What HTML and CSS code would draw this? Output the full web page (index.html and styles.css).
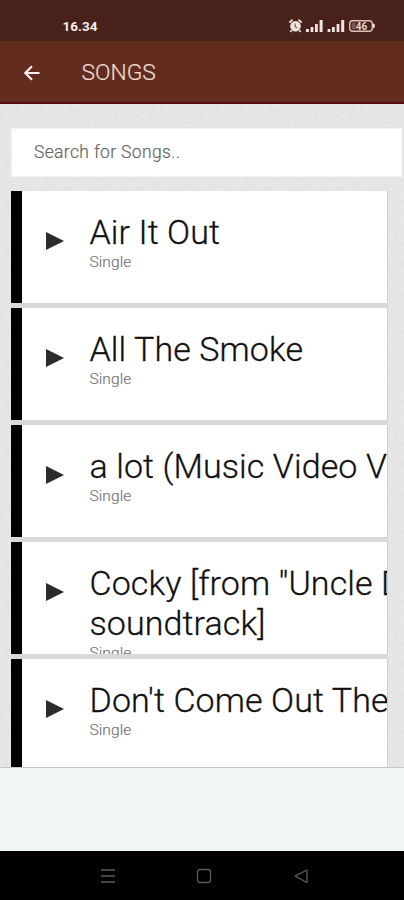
FILE: index.html
```html
<!DOCTYPE html>
<html lang="en">
<head>
<meta charset="utf-8">
<title>Songs</title>
<link rel="stylesheet" href="styles.css">
</head>
<body>
<div class="status">
  <span class="time">16.34</span>
  <svg class="indicators" width="90" height="16" viewBox="0 0 90 16">
    <g fill="#efe4df">
      <circle cx="7.5" cy="8.3" r="5.3"/>
      <path d="M1.3 4.6 4.6 1.6M13.7 4.6 10.4 1.6M3.6 12.4 2.4 13.8M11.4 12.4 12.6 13.8" stroke="#efe4df" stroke-width="1.8"/>
      <path d="M18 11h2.8v3H18zM22.600 9h2.800v5h-2.800zM27 6h2.800v8H27zM31.600 2h3v12h-3zM39.600 11h2.800v3h-2.800zM44 9h2.800v5H44zM48.600 6h2.800v8h-2.800zM53.200 2h3v12h-3z"/>
      <path d="M84.500 5.300q2.500.3 2.500 2.700t-2.500 2.700z"/>
    </g>
    <path d="M7.200 5.500v3.200l2 1.300" fill="none" stroke="#7b5a50" stroke-width="1.200"/>
    <rect x="61.700" y="2.700" width="22.600" height="10.600" rx="3" fill="none" stroke="#d9c3bb" stroke-width="1.400"/>
    <rect x="63.700" y="4.700" width="4" height="6.600" fill="#7a584f"/>
    <text class="charge" x="73.500" y="11.600" text-anchor="middle">46</text>
  </svg>
</div>
<header class="bar">
  <svg class="back" width="18" height="18" viewBox="0 0 18 18"><path d="M16.500 9H3M9 2.300 2.300 9 9 15.700" fill="none" stroke="#f8efec" stroke-width="2.200"/></svg>
  <h1>SONGS</h1>
</header>
<main class="content">
  <input class="search" type="text" placeholder="Search for Songs.." aria-label="Search for Songs">
  <ul class="songs">
    <li class="song"><svg class="play" viewBox="0 0 18 18"><path d="M0 0 18 9 0 18z"/></svg><div class="text"><h2>Air It Out</h2><p>Single</p></div></li>
    <li class="song"><svg class="play" viewBox="0 0 18 18"><path d="M0 0 18 9 0 18z"/></svg><div class="text"><h2>All The Smoke</h2><p>Single</p></div></li>
    <li class="song"><svg class="play" viewBox="0 0 18 18"><path d="M0 0 18 9 0 18z"/></svg><div class="text"><h2>a lot (Music Video V</h2><p>Single</p></div></li>
    <li class="song"><svg class="play" viewBox="0 0 18 18"><path d="M0 0 18 9 0 18z"/></svg><div class="text"><h2>Cocky [from "Uncle D<br>soundtrack]</h2><p>Single</p></div></li>
    <li class="song"><svg class="play" viewBox="0 0 18 18"><path d="M0 0 18 9 0 18z"/></svg><div class="text"><h2>Don't Come Out The</h2><p>Single</p></div></li>
  </ul>
</main>
<div class="banner"></div>
<nav class="keys">
  <svg width="16" height="16" viewBox="0 0 16 16"><path d="M1 2h14M1 8h14M1 14h14"/></svg>
  <svg width="16" height="16" viewBox="0 0 16 16"><rect x="1.500" y="1.500" width="13" height="13" rx="2.500"/></svg>
  <svg width="16" height="16" viewBox="0 0 16 16"><path d="M14 2v12.500L2 8.200z" stroke-linejoin="round"/></svg>
</nav>
</body>
</html>
```
FILE: styles.css
```css
* { box-sizing: border-box; margin: 0; padding: 0; }
body {
  width: 404px;
  height: 900px;
  overflow: hidden;
  display: flex;
  flex-direction: column;
  font-family: Roboto, "Liberation Sans", sans-serif;
  background: #000;
}
.status {
  flex: none;
  height: 41px;
  padding: 12px 26px 0 62.5px;
  display: flex;
  justify-content: space-between;
  background: #48211b;
}
.time { font-size: 13.5px; line-height: 30px; margin-top: -1px; font-weight: 700; color: #f7edea; }
.indicators { margin-top: 6px; }
.charge { font-size: 10px; font-weight: 700; fill: #e8d8d2; }
.bar {
  flex: none;
  height: 63px;
  display: flex;
  align-items: center;
  padding-left: 23px;
  background: #622c1f;
  border-bottom: 2px solid #580b10;
}
.back { margin-right: 40.5px; margin-top: 2px; }
.bar h1 { font-size: 22.8px; font-weight: 300; -webkit-text-stroke: 0.2px; color: #eed9d3; line-height: 28px; margin-top: 3px; }
.content {
  flex: none;
  height: 663px;
  overflow: hidden;
  padding: 24px 0 0 11px;
  background: #e7e7e7 url("data:image/svg+xml,%3Csvg xmlns='http://www.w3.org/2000/svg' width='200' height='200'%3E%3Cfilter id='n' x='0' y='0' width='1' height='1'%3E%3CfeTurbulence type='fractalNoise' baseFrequency='.2 .35' numOctaves='2' stitchTiles='stitch'/%3E%3CfeColorMatrix values='0 0 0 0 .45 0 0 0 0 .45 0 0 0 0 .45 .25 0 0 0 -.1'/%3E%3C/filter%3E%3Crect width='200' height='200' filter='url(%23n)'/%3E%3C/svg%3E");
}
.search {
  display: block;
  width: 391px;
  height: 49px;
  border: 1px solid #f3f3f3;
  background: #fff;
  padding: 0 22px 1px;
  font: 300 17.500px Roboto, sans-serif;
  letter-spacing: 0.35px;
  color: #555;
}
.search::placeholder { color: #666; opacity: 1; -webkit-text-stroke: 0.2px; }
.songs { list-style: none; margin-top: 14px; width: 377px; display: flex; flex-direction: column; background: #d9d9d9; }
.song {
  height: 112px;
  margin-bottom: 5px;
  flex: none;
  display: flex;
  overflow: hidden;
  background: #fff;
  border-left: 11px solid #000;
  border-right: 1px solid #cfcfcf;
  padding: 21px 0 0 24px;
}
.play { flex: none; width: 18px; height: 18px; margin: 20px 25.5px 0 0; fill: #2b2b2b; }
.text { flex: none; white-space: nowrap; }
.song h2 { font-size: 34px; font-weight: 300; letter-spacing: 0.1px; -webkit-text-stroke: 0.3px; line-height: 40px; color: #111; }
.song p { font-size: 15.500px; font-weight: 300; -webkit-text-stroke: 0.15px; letter-spacing: 0.1px; line-height: 18px; margin-top: 1px; color: #707070; }
.banner { flex: none; height: 84px; background: #f0f6f5; border-top: 1px solid #c3c7c6; }
.keys {
  flex: none;
  height: 49px;
  display: flex;
  justify-content: center;
  align-items: center;
  gap: 80.5px;
  padding-left: 4px;
  background: #000;
}
.keys svg { fill: none; stroke: #5a5a5a; stroke-width: 1.300; }
```
